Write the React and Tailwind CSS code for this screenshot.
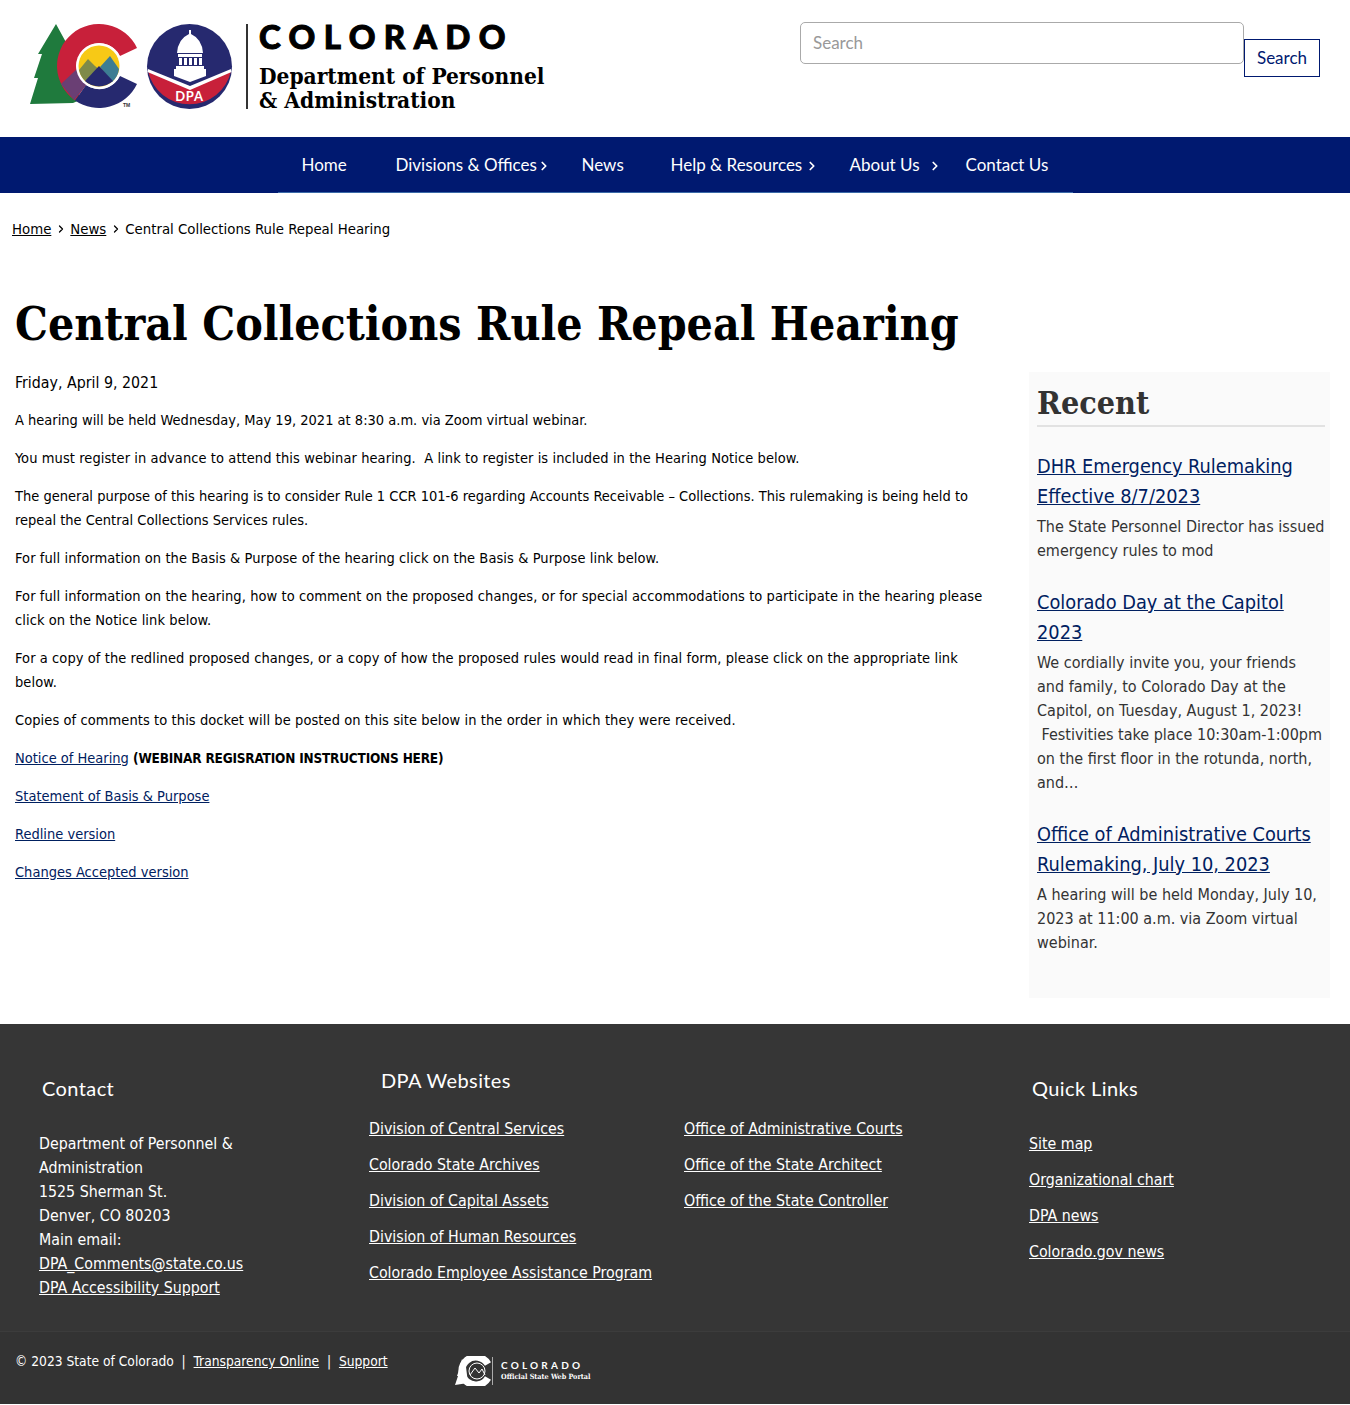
import React from "react";
import { ChevronRight } from "lucide-react";

const bodyFont = "font-['DejaVu_Sans_Condensed','DejaVu_Sans',sans-serif]";
const navFont = "font-['Lato','Liberation_Sans',sans-serif]";
const slabFont = "font-['DejaVu_Serif_Condensed','DejaVu_Serif',serif]";

const LogoMarks = () => (
  <svg viewBox="30 22 206 90" className="w-[206px] h-[90px] shrink-0">
    <polygon points="56,24 68,46 64,46 72,62 68,62 76,78 80,100 73,103 30,104 38,78 34,78 42,54 38,54" fill="#1f7a3d" />
    <path d="M137 48 A42 42 0 1 0 75 100.4 L86 85 A23 23 0 1 1 120 56 Z" fill="#c8203a" />
    <path d="M75 100.4 A42 42 0 0 0 137 84 L120 76 A23 23 0 0 1 86 85 Z" fill="#26296f" />
    <path d="M61 84 L78 68 L87 84 L74 100 Z" fill="#6a3f74" />
    <circle cx="99" cy="66" r="23" fill="#fff" />
    <circle cx="99" cy="66" r="20.5" fill="#f7c916" />
    <path d="M79 70 L88 59 L95 66 L100 70 L92 85 A20.5 20.5 0 0 1 79 70 Z" fill="#7f8a49" />
    <path d="M100 67 L110 56 L119 69 A20.5 20.5 0 0 1 112 82 Z" fill="#3d7d93" />
    <path d="M85 81 L99 66 L113 81 A20.5 20.5 0 0 1 85 81 Z" fill="#26296f" />
    <text x="123" y="107" fontSize="5" fontWeight="700" fill="#333" fontFamily="Liberation Sans">TM</text>
    <circle cx="189.5" cy="66.5" r="42.5" fill="#26296f" />
    <path d="M148 71 L190 88 L231 71 A42.5 42.5 0 0 1 148 71 Z" fill="#c8203a" />
    <path d="M148 69 L190 86 L231 69 L231.5 72 L190 90 L147.5 72 Z" fill="#fff" />
    <path d="M189 30 h2 v4 q11 5 12 19 h-26 q1 -14 12 -19 Z" fill="#fff" />
    <path d="M178 54 h24 v3 h-24 Z M179 58 h3 v7 h-3 Z M184 58 h3 v7 h-3 Z M189 58 h3 v7 h-3 Z M194 58 h3 v7 h-3 Z M199 58 h3 v7 h-3 Z" fill="#fff" />
    <path d="M176 66 h28 v3 h2 v7 l-16 6 l-16 -6 v-7 h2 Z" fill="#fff" />
    <text x="189.5" y="101" textAnchor="middle" fontSize="13" fontWeight="700" letterSpacing="0.8" fill="#fff" fontFamily="Lato">DPA</text>
  </svg>
);

const Logo = () => (
  <div className="flex items-start">
    <LogoMarks />
    <div className="ml-[10px] mt-[2px] w-[2px] h-[85px] bg-[#333]" />
    <div className="ml-[11px] -mt-[1px] text-black">
      <div className="font-['Lato',sans-serif] font-black text-[33px] leading-[30px] tracking-[8.4px] [-webkit-text-stroke:1px_black]">COLORADO</div>
      <div className={`mt-[13px] ${slabFont} font-bold text-[22.5px] leading-[24px] whitespace-nowrap`}>
        Department of Personnel
        <br />& Administration
      </div>
    </div>
  </div>
);

const navItems = [
  { label: "Home", w: "w-[94px]" },
  { label: "Divisions & Offices", w: "w-[186px]", arrow: "left-[165px]" },
  { label: "News", w: "w-[89px]" },
  { label: "Help & Resources", w: "w-[179px]", arrow: "left-[158px]" },
  { label: "About Us", w: "w-[116px]", arrow: "left-[102px]" },
  { label: "Contact Us", w: "w-[131px]" },
];

const NavBar = () => (
  <nav className={`bg-[#001970] h-[56px] flex justify-center ${navFont}`}>
    <ul className="w-[795px] h-[56px] border-b border-[#3a6aa8] flex items-center">
      {navItems.map((item) => (
        <li key={item.label} className={`relative ${item.w} pl-6 text-[17px] leading-[24px] text-white whitespace-nowrap`}>
          {item.label}
          {item.arrow && (
            <ChevronRight size={14} strokeWidth={3} className={`absolute top-[6px] ${item.arrow}`} />
          )}
        </li>
      ))}
    </ul>
  </nav>
);

const paragraphs = [
  { text: "A hearing will be held Wednesday, May 19, 2021 at 8:30 a.m. via Zoom virtual webinar." },
  { wide: true, text: "You must register in advance to attend this webinar hearing.\u00a0 A link to register is included in the Hearing Notice below." },
  { text: "The general purpose of this hearing is to consider Rule 1 CCR 101-6 regarding Accounts Receivable – Collections. This rulemaking is being held to repeal the Central Collections Services rules." },
  { wide: true, text: "For full information on the Basis & Purpose of the hearing click on the Basis & Purpose link below." },
  { wide: true, text: "For full information on the hearing, how to comment on the proposed changes, or for special accommodations to participate in the hearing please click on the Notice link below." },
  { wide: true, text: "For a copy of the redlined proposed changes, or a copy of how the proposed rules would read in final form, please click on the appropriate link below." },
  { wide: true, text: "Copies of comments to this docket will be posted on this site below in the order in which they were received." },
];

const recent = [
  {
    title: "DHR Emergency Rulemaking Effective 8/7/2023",
    text: "The State Personnel Director has issued emergency rules to mod",
  },
  {
    title: "Colorado Day at the Capitol 2023",
    text: "We cordially invite you, your friends and family, to Colorado Day at the Capitol, on Tuesday, August 1, 2023! \u00a0Festivities take place 10:30am-1:00pm on the first floor in the rotunda, north, and…",
  },
  {
    title: "Office of Administrative Courts Rulemaking, July 10, 2023",
    text: "A hearing will be held Monday, July 10, 2023 at 11:00 a.m. via Zoom virtual webinar.",
  },
];

const Sidebar = () => (
  <aside className="w-[301px] h-[626px] bg-[#fafafa] pl-[8px] pr-[4px] shrink-0">
    <h2 className={`mt-[12px] pb-[3px] border-b-2 border-[#e2e2e2] w-[288px] ${slabFont} font-bold text-[32px] leading-[38px] text-[#333]`}>
      Recent
    </h2>
    {recent.map((r) => (
      <div key={r.title} className="mt-[25px]">
        <a href="#" className="block text-[19.8px] leading-[30px] text-[#002060] underline">{r.title}</a>
        <p className="mt-[3px] text-[16px] leading-[24px] text-[#333]">{r.text}</p>
      </div>
    ))}
  </aside>
);

const col1 = ["Division of Central Services", "Colorado State Archives", "Division of Capital Assets", "Division of Human Resources", "Colorado Employee Assistance Program"];
const col2 = ["Office of Administrative Courts", "Office of the State Architect", "Office of the State Controller"];
const quick = ["Site map", "Organizational chart", "DPA news", "Colorado.gov news"];

const FooterLinks = ({ links, className }) => (
  <ul className={`flex flex-col gap-[12px] ${className}`}>
    {links.map((l) => (
      <li key={l} className="leading-[24px]"><a href="#" className="underline">{l}</a></li>
    ))}
  </ul>
);

const FooterHeading = ({ children, className }) => (
  <h3 className={`${navFont} ${className} text-[20px] tracking-[0.4px] leading-[26px]`}>{children}</h3>
);

const Footer = () => (
  <footer className="bg-[#363636] text-white mt-[26px]">
    <div className="h-[307px] flex text-[15.8px]">
      <div className="w-[369px] pl-[39px] pt-[51px]">
        <FooterHeading className="pl-[3px]">Contact</FooterHeading>
        <div className="mt-[31px] w-[230px] leading-[24px]">
          Department of Personnel & Administration
          <br />1525 Sherman St.
          <br />Denver, CO 80203
          <br />Main email:
          <br /><a href="#" className="underline">DPA_Comments@state.co.us</a>
          <br /><a href="#" className="underline">DPA Accessibility Support</a>
        </div>
      </div>
      <div className="w-[660px] pt-[43px]">
        <FooterHeading className="pl-[12px]">DPA Websites</FooterHeading>
        <div className="mt-[24px] flex">
          <FooterLinks links={col1} className="w-[315px]" />
          <FooterLinks links={col2} />
        </div>
      </div>
      <div className="pt-[51px]">
        <FooterHeading className="pl-[3px]">Quick Links</FooterHeading>
        <FooterLinks links={quick} className="mt-[31px]" />
      </div>
    </div>
    <div className="h-[73px] bg-[#333] border-t border-[#3c3c3c] pl-[15px] flex text-[13.7px]">
      <div className="w-[440px] pt-[17px] leading-[24px]">
        © 2023 State of Colorado &nbsp;|&nbsp; <a href="#" className="underline">Transparency Online</a> &nbsp;|&nbsp; <a href="#" className="underline">Support</a>
      </div>
      <div className="pt-[24px] flex items-center h-[54px]">
        <svg viewBox="0 0 36 30" className="w-[36px] h-[30px]">
          <polygon points="7,3 11,11 13,27 0,29 3,20 2,20 5,11" fill="#fff" />
          <path d="M33 8 A14 14 0 1 0 33 22" fill="none" stroke="#fff" strokeWidth="7" />
          <circle cx="22" cy="15" r="8" fill="#333" stroke="#fff" strokeWidth="1" />
          <path d="M15 19 L20 12 L24 17 L27 13 L30 19" fill="none" stroke="#fff" strokeWidth="1" />
        </svg>
        <div className="ml-[1px] w-px h-[28px] bg-[#aaa]" />
        <div className="ml-[8px]">
          <div className="font-['Lato',sans-serif] font-bold text-[10px] leading-[12px] tracking-[3.2px]">COLORADO</div>
          <div className={`${slabFont} font-bold text-[7.2px] leading-[12px]`}>Official State Web Portal</div>
        </div>
      </div>
    </div>
  </footer>
);

export default function App() {
  return (
    <div className={`bg-white text-black ${bodyFont}`}>
      <header className="h-[137px] flex pl-[30px] pr-[30px]">
        <div className="w-[770px] pt-[22px]"><Logo /></div>
        <div className={`flex items-start pt-[22px] ${navFont}`}>
          <input
            placeholder="Search"
            className="w-[444px] h-[42px] px-3 pb-[2px] border border-[#aaa] rounded-[5px] text-[17px] placeholder-[#999]"
          />
          <button className="mt-[17px] w-[76px] h-[38px] border border-[#001970] text-[17px] text-[#001970]">Search</button>
        </div>
      </header>
      <NavBar />
      <div className="mt-[24px] mb-[-1px] pl-[12px] flex items-center text-[14.8px] leading-[24px]">
        <a href="#" className="underline">Home</a>
        <ChevronRight size={12} strokeWidth={2.5} className="mx-[3.5px]" />
        <a href="#" className="underline">News</a>
        <ChevronRight size={12} strokeWidth={2.5} className="mx-[3.5px]" />
        <span>Central Collections Rule Repeal Hearing</span>
      </div>
      <h1 className={`mt-[55px] pl-[15px] ${slabFont} font-bold text-[46px] leading-[58px]`}>
        Central Collections Rule Repeal Hearing
      </h1>
      <div className="mt-[19px] pl-[15px] flex justify-between pr-[20px]">
        <main className="w-[975px] text-[14.5px] leading-[24px]">
          <div className="text-[15.8px] mb-[13px] -mt-[1px]">Friday, April 9, 2021</div>
          {paragraphs.map((p) => (
            <p key={p.text} className={p.wide ? "mb-[14px] tracking-[0.08px]" : "mb-[14px]"}>{p.text}</p>
          ))}
          <p className="mb-[14px]">
            <a href="#" className="underline text-[#002060]">Notice of Hearing</a>{" "}
            <strong className="text-[13.5px] tracking-[-0.2px]">(WEBINAR REGISRATION INSTRUCTIONS HERE)</strong>
          </p>
          <p className="mb-[14px]"><a href="#" className="underline text-[#002060]">Statement of Basis & Purpose</a></p>
          <p className="mb-[14px]"><a href="#" className="underline text-[#002060]">Redline version</a></p>
          <p className="mb-[14px]"><a href="#" className="underline text-[#002060]">Changes Accepted version</a></p>
        </main>
        <Sidebar />
      </div>
      <Footer />
    </div>
  );
}
